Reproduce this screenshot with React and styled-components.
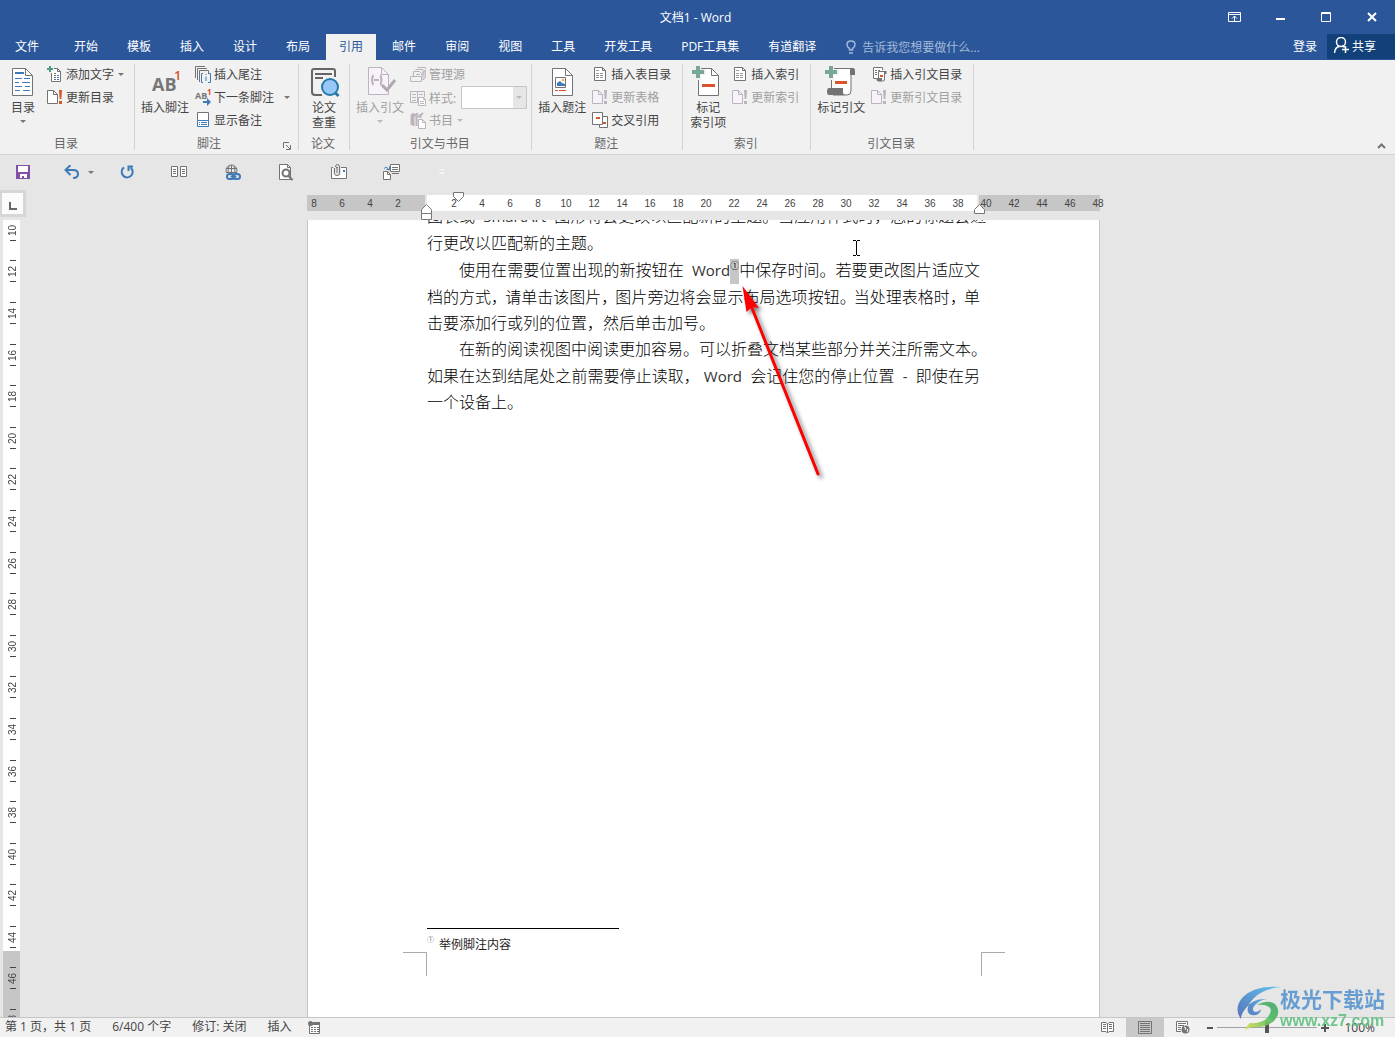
import React from "react";
import styled, { createGlobalStyle, css } from "styled-components";

const GlobalStyle = createGlobalStyle`
  * {
    box-sizing: border-box;
  }
  body {
    margin: 0;
    font-family: "Open Sans", "Noto Sans CJK SC", sans-serif;
    font-size: 12px;
    color: #444;
    background: #e6e6e6;
  }
  button,
  input,
  select {
    font: inherit;
    color: inherit;
    border: 0;
    padding: 0;
    margin: 0;
    background: none;
    border-radius: 0;
  }
  svg {
    display: block;
    flex: none;
  }
`;

const AppStyles = styled.div`
  min-height: 100vh;
  display: flex;
  flex-direction: column;
  position: relative;
  overflow: hidden;
`;

/* ---------- title bar and tabs ---------- */

const TitleBar = styled.header`
  height: 34px;
  background: #2b579a;
  color: white;
  display: grid;
  grid-template-columns: 1fr auto 1fr;
  align-items: center;
  h1 {
    margin: 0;
    padding-right: 4px;
    font-size: 12px;
    font-weight: 400;
  }
`;

const WindowButtons = styled.div`
  grid-column: 3;
  display: flex;
  justify-content: flex-end;
  button {
    width: 46px;
    height: 32px;
    display: flex;
    align-items: center;
    justify-content: center;
  }
`;

const TabBar = styled.nav`
  height: 26px;
  padding-left: 2px;
  background: #2b579a;
  color: white;
  display: flex;
  gap: 3px;
`;

const Tab = styled.button`
  padding: 0 13px;
  line-height: 22px;
  height: 26px;
  white-space: nowrap;
  ${({ $file }) =>
    $file &&
    css`
      margin-right: 6px;
    `}
  ${({ $active }) =>
    $active &&
    css`
      background: #f1f1f1;
      color: #2b579a;
    `}
`;

const TellMe = styled.label`
  display: flex;
  align-items: center;
  gap: 6px;
  margin-left: 14px;
  flex: 1;
  color: #a3b9d9;
  input {
    width: 160px;
  }
  input::placeholder {
    color: #a3b9d9;
    opacity: 1;
  }
`;

const Share = styled.button`
  display: flex;
  align-items: center;
  gap: 3px;
  height: 25px;
  width: 68px;
  padding: 0 0 2px 7px;
  margin-left: -6px;
  background: #124078;
`;

/* ---------- ribbon ---------- */

const Ribbon = styled.section`
  height: 95px;
  padding: 4px 0;
  background: #f1f1f1;
  border-bottom: 1px solid #d2d2d2;
  display: flex;
`;

const GroupStyles = styled.div`
  height: 86px;
  border-right: 1px solid #d2d2d2;
  display: flex;
  flex-direction: column;
  justify-content: space-between;
`;

const GroupBody = styled.div`
  display: flex;
  gap: 6px;
  padding: 0 ${({ $end }) => $end}px 0 ${({ $start }) => $start}px;
`;

const GroupLabel = styled.div`
  display: flex;
  line-height: 12px;
  padding-right: 2px;
  color: #666;
  span {
    flex: 1;
    text-align: center;
  }
  button {
    width: 13px;
    display: flex;
    align-items: flex-end;
  }
`;

const LargeButtonStyles = styled.button`
  min-width: 36px;
  padding-top: 2px;
  display: flex;
  flex-direction: column;
  align-items: center;
  line-height: 15px;
  white-space: pre-line;
  color: ${({ disabled }) => (disabled ? "#a0a0a0" : "#444")};
  > svg:first-child {
    margin-bottom: 2px;
  }
  > svg:last-child {
    margin-top: 5px;
  }
`;

const Column = styled.div`
  display: flex;
  flex-direction: column;
  gap: 2px;
`;

const SmallButtonStyles = styled.button`
  height: 21px;
  display: flex;
  align-items: center;
  gap: 3px;
  white-space: nowrap;
  line-height: 17px;
  color: ${({ disabled }) => (disabled ? "#a0a0a0" : "#444")};
  > svg:last-child {
    margin-left: ${({ $far }) => ($far ? 7 : 1)}px;
  }
`;

const StyleField = styled.div`
  height: 21px;
  display: flex;
  align-items: center;
  gap: 3px;
  color: #a0a0a0;
`;

const StyleSelect = styled.div`
  display: grid;
  margin-left: 2px;
  width: 66px;
  height: 23px;
  border: 1px solid #c6c6c6;
  background: linear-gradient(to left, #e6e6e6 13px, white 13px);
  align-items: center;
  select,
  svg {
    grid-area: 1 / 1;
  }
  select {
    appearance: none;
    width: 100%;
    height: 100%;
  }
  svg {
    justify-self: end;
    margin-right: 4px;
    pointer-events: none;
  }
`;

const Collapse = styled.button`
  margin-left: auto;
  padding-right: 9px;
  align-self: flex-end;
  height: 8px;
`;

const QuickBar = styled.div`
  height: 34px;
  display: flex;
`;

const QuickButton = styled.button`
  width: ${({ $width }) => $width || 53}px;
  display: flex;
  align-items: center;
  justify-content: center;
  gap: 8px;
  ${({ $split }) =>
    $split &&
    css`
      padding-left: 12px;
    `}
`;

/* ---------- rulers and page ---------- */

const RulerRow = styled.div`
  height: 31px;
  display: flex;
`;

const TabSelector = styled.button`
  width: 26px;
  height: 27px;
  margin-top: 1px;
  background: #fbfbfb;
  border: 3px solid #d6d6d6;
  border-left-width: 2px;
  display: flex;
  align-items: flex-end;
  justify-content: center;
  padding-bottom: 4px;
`;

const Desk = styled.div`
  flex: 1;
  display: flex;
  justify-content: center;
  padding-right: 14px;
`;

const HRuler = styled.div`
  width: 793px;
  height: 16px;
  margin-top: 6px;
  position: relative;
  background: linear-gradient(
    to right,
    #c6c6c6 118px,
    #e6e6e6 118px,
    #e6e6e6 120px,
    white 120px,
    white calc(100% - 123px),
    #e6e6e6 calc(100% - 123px),
    #e6e6e6 calc(100% - 121px),
    #c6c6c6 calc(100% - 121px)
  );
`;

const HScale = styled.div`
  display: flex;
  margin-left: -7px;
  font: 10px/18px "Liberation Sans", sans-serif;
  span {
    flex: none;
    width: 28px;
    text-align: center;
  }
`;

const Marker = styled.svg`
  position: absolute;
  left: ${({ $x }) => $x}px;
  top: ${({ $y }) => $y}px;
`;

const Work = styled.main`
  flex: 1;
  display: flex;
`;

const VRuler = styled.div`
  width: 17px;
  margin: 0 6px 0 3px;
  padding-left: 2px;
  overflow: hidden;
  display: flex;
  background: linear-gradient(to top, #c6c6c6 66px, white 66px);
`;

const VScale = styled.div`
  flex: 1;
  margin: -11px 0 -24px;
  display: flex;
  flex-direction: column;
`;

const VMark = styled.div`
  flex: 1;
  display: flex;
  flex-direction: column;
  align-items: center;
  justify-content: center;
  font: 10px/12px "Liberation Sans", sans-serif;
  gap: 4px;
  span {
    height: 12px;
    width: 12px;
    display: flex;
    justify-content: center;
    writing-mode: vertical-rl;
    transform: rotate(180deg);
  }
  &::before,
  &::after {
    content: "";
    width: 6px;
    height: 1px;
    background: #444;
  }
`;

const Page = styled.article`
  width: 793px;
  position: relative;
  overflow: hidden;
  background: white;
  border: 1px solid #c6c6c6;
  border-width: 0 1px;
  display: flex;
  flex-direction: column;
`;

const Body = styled.div`
  margin: -17px 119px 0;
  flex: 1;
  color: black;
  font-size: 16px;
  font-weight: 300;
  p {
    margin: 0;
  }
`;

const Line = styled.span`
  display: block;
  white-space: nowrap;
  line-height: ${({ $short }) => ($short ? 26 : 27)}px;
  height: ${({ $short }) => ($short ? 26 : 27)}px;
  padding-left: ${({ $indent }) => ($indent ? 32 : 0)}px;
  text-align-last: ${({ $end }) => ($end ? "left" : "justify")};
`;

const Latin = styled.span`
  margin: 0 4px;
  font-size: 15px;
  font-weight: 400;
  color: #333;
  & + sup {
    margin-left: -4px;
  }
`;

const Stop = styled.span`
  margin-right: -2px;
`;

const NoteRef = styled.sup`
  display: inline-block;
  height: 25px;
  width: 9px;
  margin-top: 2px;
  overflow: hidden;
  vertical-align: top;
  background: #c6c6c6;
  font: 400 9px/13px "Noto Sans CJK SC", sans-serif;
`;

const Footnote = styled.footer`
  margin: 0 119px;
  height: 24px;
  color: #222;
  line-height: 17px;
  hr {
    width: 192px;
    height: 1px;
    margin: 0 0 7px;
    border: 0;
    background: black;
  }
  sup {
    display: inline-block;
    width: 12px;
    font-size: 7px;
    line-height: 8px;
    color: #666;
    vertical-align: top;
  }
`;

const Corners = styled.div`
  display: flex;
  justify-content: space-between;
  padding: 0 94px 41px 95px;
  i {
    width: 24px;
    height: 24px;
    border-top: 1px solid #ababab;
  }
  i:first-child {
    border-right: 1px solid #ababab;
  }
  i:last-child {
    border-left: 1px solid #ababab;
  }
`;

const Overlay = styled.svg`
  position: absolute;
  left: ${({ $x }) => $x}px;
  top: ${({ $y }) => $y}px;
  overflow: visible;
`;

/* ---------- status bar ---------- */

const StatusBar = styled.footer`
  height: 20px;
  border-top: 1px solid #c6c6c6;
  background: #f1f1f1;
  display: flex;
  justify-content: space-between;
  line-height: 17px;
  white-space: nowrap;
`;

const StatusInfo = styled.div`
  display: flex;
  align-items: flex-start;
  gap: 21px;
  padding-left: 5px;
  svg {
    margin-top: 3px;
    margin-left: -4px;
  }
`;

const StatusView = styled.div`
  display: flex;
  align-items: center;
  padding-right: 20px;
`;

const ViewButton = styled.button`
  width: 38px;
  height: 19px;
  display: flex;
  align-items: center;
  justify-content: center;
  background: ${({ $active }) => ($active ? "#c9c9c9" : "none")};
`;

const Zoom = styled.div`
  display: flex;
  align-items: center;
  gap: 4px;
  margin-left: 5px;
  input {
    appearance: none;
    width: 100px;
    height: 13px;
    background: linear-gradient(#a0a0a0, #a0a0a0) center / 100% 1px no-repeat;
  }
  input::-webkit-slider-thumb {
    appearance: none;
    width: 4px;
    height: 11px;
    background: #555;
  }
  output {
    margin-left: 11px;
  }
`;

const Watermark = styled.div`
  position: absolute;
  right: 10px;
  bottom: 7px;
  display: flex;
  pointer-events: none;
  opacity: 0.9;
  div {
    display: flex;
    flex-direction: column;
    margin-left: -1px;
  }
  strong {
    font-size: 21px;
    line-height: 26px;
    font-weight: 700;
    color: #5a96cf;
  }
  span {
    font: bold 16px/18px "Liberation Sans", sans-serif;
    color: #62c183;
  }
`;

/* ---------- drawings ---------- */

const GRAY = "#737373";
const PALE = "#bcb4bc";
const BLUE = "#3e7ab8";
const RED = "#d9532c";
const GREEN = "#76a797";

const Icon = ({ w = 16, h = 17, children, ...rest }) => (
  <svg
    width={w}
    height={h}
    viewBox={`0 0 ${w} ${h}`}
    fill="none"
    stroke={GRAY}
    aria-hidden="true"
    {...rest}
  >
    {children}
  </svg>
);

const Sheet = ({ x = 0, y = 0, w, h, f = 4, color = GRAY, fill = "white" }) => (
  <g transform={`translate(${x + 0.5} ${y + 0.5})`} stroke={color}>
    <path d={`M0 0H${w - f}L${w} ${f}V${h}H0Z`} fill={fill} />
    <path d={`M${w - f} 0V${f}H${w}`} />
  </g>
);

const Caret = ({ color = "#777" }) => (
  <svg width="6" height="3" viewBox="0 0 6 3" aria-hidden="true">
    <path d="M0 0H6L3 3Z" fill={color} />
  </svg>
);

const TocIcon = () => (
  <Icon w={32} h={32}>
    <Sheet x={5} y={2} w={20} h={27} f={7} />
    <path
      d="M8 12.500h7M8 16.500h4M8 20.500h7M8 24.500h5M17 12.500h6M15 16.500h8M18 20.500h5M16 24.500h7"
      stroke={BLUE}
    />
    <path d="M8 7h9" stroke={BLUE} strokeWidth="2" />
  </Icon>
);

const AddTextIcon = () => (
  <Icon>
    <Sheet x={4} y={2} w={9} h={13} f={3} />
    <path d="M7 7.500h2M7 9.500h2M7 11.500h2M7 13.500h2" />
    <path d="M10 9.500h2M10 11.500h2M10 13.500h2" stroke={BLUE} />
    <path d="M-1 3H7M3 -1V7" stroke="#f1f1f1" strokeWidth="4" />
    <path d="M0 3H6M3 0V6" stroke="#4f9c83" strokeWidth="2" />
  </Icon>
);

const UpdateIcon = ({ off }) => (
  <Icon>
    <Sheet
      y={1}
      w={10}
      h={13}
      color={off ? PALE : GRAY}
      fill={off ? "#f8f3fa" : "white"}
    />
    <path
      d="M12 1h3l-.6 9h-1.800zM12 12h3v3h-3z"
      fill={off ? PALE : RED}
      stroke="none"
    />
  </Icon>
);

const FootnoteIcon = () => (
  <Icon w={32} h={32} stroke="none" fontFamily="Open Sans, sans-serif">
    <text x="3" y="25" fontSize="18" fontWeight="700" fill="#777">
      AB
    </text>
    <text x="25" y="14" fontSize="13" fontWeight="600" fill={RED}>
      1
    </text>
  </Icon>
);

const EndnoteIcon = () => (
  <Icon>
    <path d="M.5 12V.5H10M2.500 14V2.500H12M4.500 16V4.500H13.500V7" />
    <path
      d="M8 7.500H6.500V16.500H8M13 7.500h2.500V16.500H13M11 10.500V15M11 8v1"
      stroke={BLUE}
    />
  </Icon>
);

const NextNoteIcon = () => (
  <Icon stroke="none" fontFamily="Open Sans, sans-serif" fontWeight="700">
    <text x="0" y="10" fontSize="9" fill="#777">
      AB
    </text>
    <text x="12" y="6" fontSize="8" fill={RED}>
      1
    </text>
    <path d="M8 12h4v-3l4 4-4 4v-3H8z" fill={BLUE} />
  </Icon>
);

const ShowNotesIcon = () => (
  <Icon>
    <path d="M2.500 9V.5H13.500V9" fill="white" />
    <path d="M2.500 8.500h11v6h-11z" fill="white" stroke={BLUE} />
    <path d="M4 10.500h1M6 10.500h6M4 12.500h1M6 12.500h6" stroke={BLUE} />
  </Icon>
);

const PaperIcon = () => (
  <Icon w={32} h={32}>
    <path
      d="M27 11V5q0-2-2-2H6Q4 3 4 5V26q0 3 3 3h7"
      stroke="#666"
      strokeWidth="2"
    />
    <path d="M7 8H24M7 12h8" stroke="#666" strokeWidth="2" />
    <circle cx="22" cy="21" r="8" fill="#98c8f8" stroke="#2779a8" strokeWidth="2" />
    <path d="M27.500 27l3 3" stroke="#2779a8" strokeWidth="3" />
  </Icon>
);

const CitationIcon = () => (
  <Icon w={32} h={32} stroke={PALE}>
    <Sheet x={4} y={1} w={20} h={27} f={7} color={PALE} fill="#f8f3fa" />
    <path d="M9.500 9.500H9Q7 14 9 18.500h.5M16 9.500h.5q2 4.500 0 9H16M10 14h5" strokeWidth="2" />
    <path d="M18 19l5 5L31 14" strokeWidth="3" stroke="#b0aab0" />
  </Icon>
);

const SourcesIcon = () => (
  <Icon stroke={PALE}>
    <path d="M.5 10.500h11v5H.5zM3.500 10V5.500h6L12 8v2M5.500 3.500H13V9M7.500 1.500H16V12" />
    <path d="M13 14V7l2-3v8zM6 8.500h4" />
  </Icon>
);

const StyleIcon = () => (
  <Icon stroke={PALE}>
    <path d="M.5 2.500h7v11h-7zM7.500 2.500h7V8M2 5.500h4M2 8.500h4M2 11.500h4M9 5.500h4" />
    <Sheet x={8} y={8} w={7} h={8} f={2} color={PALE} />
    <path d="M10 12.500h4M10 14.500h4" />
  </Icon>
);

const BooksIcon = () => (
  <Icon stroke={PALE}>
    <path
      d="M1.500 4v9M3.500 2v12M6.500 3v11M1 3.500l3-2M4 3.500l4-2M8 5l5-4M10.500 3v3"
      strokeWidth="2"
    />
    <Sheet x={8} y={7} w={7} h={9} f={3} color={PALE} />
  </Icon>
);

const CaptionIcon = () => (
  <Icon w={32} h={32}>
    <Sheet x={6} y={2} w={20} h={27} f={7} />
    <path d="M9.500 11.500h10v10h-10z" fill="white" />
    <path d="M11 20v-3l3-2 2 2 3 1v2z" fill={BLUE} stroke="none" />
    <circle cx="17" cy="14" r="1.500" fill="#edb95e" stroke="none" />
    <path d="M9 24.500h3M13 24.500h7" stroke={RED} />
  </Icon>
);

const ListIcon = () => (
  <Icon>
    <Sheet x={2} y={1} w={11} h={13} f={3} />
    <path d="M4 4.500h4M4 7.500h8M4 9.500h8M4 11.500h8" stroke="#999" strokeDasharray="3 1" />
  </Icon>
);

const CrossRefIcon = () => (
  <Icon>
    <path d="M7.500 4.500h8v11h-8z" fill="white" />
    <path d="M.5.500h10v12H.5z" fill="white" />
    <path d="M4 6h4M11 11h3" stroke={RED} strokeWidth="2" />
  </Icon>
);

const Plus = () => (
  <path d="M0 6H12M6 0V12" stroke={GREEN} strokeWidth="4" />
);

const MarkIndexIcon = () => (
  <Icon w={32} h={32}>
    <Sheet x={6} y={2} w={20} h={27} f={7} />
    <path d="M-1 6H14M6 0V14" stroke="#f1f1f1" strokeWidth="6" />
    <Plus />
    <path d="M10 19.500H23" stroke={RED} strokeWidth="3" />
  </Icon>
);

const MarkCitationIcon = () => (
  <Icon w={32} h={32}>
    <path d="M6.500 22V2.500H26V25q0 4-4 4H8" fill="white" />
    <path d="M25 2h3q2 0 2 3v4h-5z" fill={GRAY} stroke="none" />
    <path d="M4 22H18v4q0 3 3 3H4q-2 0-2-3.500T4 22z" fill={GRAY} stroke="none" />
    <path d="M-1 6H14M6 0V14" stroke="#f1f1f1" strokeWidth="6" />
    <Plus />
    <path d="M10 16.500H22" stroke={RED} strokeWidth="3" />
  </Icon>
);

const TableOfAuthIcon = () => (
  <Icon>
    <path d="M11.500 4V1.500h-9v11H5" fill="white" />
    <path d="M4 4.500h5M4 6.500h2M4 8.500h2" strokeDasharray="2 1" />
    <path d="M7.500 12V5.500h6V14q0 1-2 1H7" fill="white" />
    <path d="M13 5h2.500v3H13zM5 12h6v3H6z" fill={GRAY} stroke="none" />
    <path d="M9 10h3" stroke={RED} strokeWidth="2" />
  </Icon>
);

const LauncherIcon = () => (
  <Icon w={8} h={8}>
    <path d="M.5 6V.5H6M3 3l4 4M7.500 3v4.500H3" />
  </Icon>
);

const SaveIcon = () => (
  <Icon w={14} h={14} stroke="none">
    <path d="M0 0h14v14H0z" fill="#8350a8" />
    <path d="M2 1h10v6H2zM4 9h7v4H8v-2H6v2H4z" fill="white" />
  </Icon>
);

const UndoIcon = () => (
  <Icon w={16} h={14} stroke={BLUE}>
    <path d="M2 5H9q5 0 5 4t-5 4" strokeWidth="2" />
    <path d="M6.500 0L1.500 5l5 5" strokeWidth="2" />
  </Icon>
);

const RedoIcon = () => (
  <Icon w={14} h={14} stroke={BLUE}>
    <path d="M10.500 2.500A5.500 5.500 0 1 1 4 2.400" strokeWidth="2" />
    <path d="M8.500 6V1.500H13" strokeWidth="2" />
  </Icon>
);

const ColumnsIcon = () => (
  <Icon w={17} h={12}>
    <path d="M.5.500h6v10h-6zM9.500.500h6v10h-6z" fill="white" />
    <path d="M2 3.500h3M2 5.500h3M2 7.500h3M11 3.500h3M11 5.500h3M11 7.500h3" />
  </Icon>
);

const LinkIcon = () => (
  <Icon w={16} h={17}>
    <circle cx="6.500" cy="6.500" r="5.500" />
    <path d="M1 4.500h11M1 8.500h11M6.500 1v11M4 2q-2 4.500 0 9M9 2q2 4.500 0 9" />
    <rect x="0" y="9" width="16" height="8" fill="#e6e6e6" stroke="none" />
    <g stroke={BLUE} strokeWidth="2">
      <rect x="2" y="10" width="7" height="5" rx="2.500" />
      <rect x="8" y="10" width="7" height="5" rx="2.500" />
      <path d="M5.500 12.500h6" />
    </g>
  </Icon>
);

const PreviewIcon = () => (
  <Icon w={16} h={17}>
    <Sheet x={1} y={0} w={11} h={15} f={3} />
    <circle cx="8" cy="9" r="3.500" fill="white" strokeWidth="2" />
    <path d="M10.500 12l4 4" strokeWidth="2" />
  </Icon>
);

const AttachIcon = () => (
  <Icon w={16} h={16}>
    <path d="M.5 3.500h15v11H.5z" fill="white" />
    <path
      d="M3.500 9.500V3q0-2.500 2.500-2.500T8.500 3v6q0 1.500-1.250 1.500T6 9V4"
      stroke="#e6e6e6"
      strokeWidth="3"
    />
    <path d="M3.500 4v5.500q0 2 2.500 2t2.500-2V3Q8.500.500 6.500.500T4.500 3M6 4v5" />
    <path d="M12 6h2v2h-2z" fill={BLUE} stroke="none" />
  </Icon>
);

const NavigateIcon = () => (
  <Icon w={17} h={17}>
    <path d="M7.500.500h9v7h-9z" fill="white" />
    <path d="M9 3.500h6M9 5.500h6M9 9.500h7" />
    <Sheet x={0} y={7} w={7} h={8} f={3} />
    <path d="M1 4.500q3-3 5 2M3.500 5.500h3v-3" stroke={BLUE} />
  </Icon>
);

/* ---------- components ---------- */

const Group = ({ label, start = 6, end = 11, launcher, children }) => (
  <GroupStyles>
    <GroupBody $start={start} $end={end}>
      {children}
    </GroupBody>
    <GroupLabel>
      <span>{label}</span>
      {launcher && (
        <button aria-label={label}>
          <LauncherIcon />
        </button>
      )}
    </GroupLabel>
  </GroupStyles>
);

const LargeButton = ({ icon, caret, disabled, children }) => (
  <LargeButtonStyles disabled={disabled}>
    {icon}
    <span>{children}</span>
    {caret && <Caret color={disabled ? "#bbb" : "#777"} />}
  </LargeButtonStyles>
);

const SmallButton = ({ icon, caret, far, disabled, children }) => (
  <SmallButtonStyles disabled={disabled} $far={far}>
    {icon}
    <span>{children}</span>
    {caret && <Caret color={disabled ? "#bbb" : "#777"} />}
  </SmallButtonStyles>
);

const tabs = [
  "文件",
  "开始",
  "模板",
  "插入",
  "设计",
  "布局",
  "引用",
  "邮件",
  "审阅",
  "视图",
  "工具",
  "开发工具",
  "PDF工具集",
  "有道翻译",
];

const hMarks = Array.from({ length: 29 }, (_, i) => Math.abs(i * 2 - 8));
const vMarks = Array.from({ length: 20 }, (_, i) => i * 2 + 10);

// full-width stops take a little less than a whole cell on crowded lines
const tighten = (text) =>
  text
    .split(/([，。])/)
    .map((part, i) => (i % 2 ? <Stop key={i}>{part}</Stop> : part));

const Header = () => (
  <>
    <TitleBar>
      <span />
      <h1>文档1 - Word</h1>
      <WindowButtons>
        <button aria-label="功能区显示选项">
          <Icon w={13} h={10} stroke="white">
            <path d="M.5.500h12v9H.5zM0 2.500h13M6.500 9V4M4 6.500L6.500 4 9 6.500" />
          </Icon>
        </button>
        <button aria-label="最小化">
          <Icon w={9} h={6} stroke="white">
            <path d="M0 5H9" strokeWidth="2" />
          </Icon>
        </button>
        <button aria-label="最大化">
          <Icon w={10} h={10} stroke="white">
            <path d="M.5.500h9v9h-9zM0 1.500h10" />
          </Icon>
        </button>
        <button aria-label="关闭">
          <Icon w={10} h={10} stroke="white">
            <path d="M1 1l8 8M9 1L1 9" strokeWidth="2" />
          </Icon>
        </button>
      </WindowButtons>
    </TitleBar>
    <TabBar>
      {tabs.map((tab, i) => (
        <Tab key={tab} $file={i === 0} $active={tab === "引用"}>
          {tab}
        </Tab>
      ))}
      <TellMe>
        <Icon w={10} h={14} stroke="#a3b9d9">
          <path
            d="M3.500 10V8.500Q1 7 1 4.500 1 1 5 1t4 3.500Q9 7 6.500 8.500V10zM3 13h4"
            strokeWidth="1.500"
          />
        </Icon>
        <input aria-label="操作说明搜索" placeholder="告诉我您想要做什么..." />
      </TellMe>
      <Tab>登录</Tab>
      <Share>
        <Icon w={15} h={17} stroke="white" strokeWidth="1.500">
          <circle cx="7" cy="5" r="4.500" />
          <path d="M.5 16Q1 10 5.500 9.500M8 9q2 .5 2.500 1.500M11.500 9v7M8 12.500h7" />
        </Icon>
        共享
      </Share>
    </TabBar>
  </>
);

const References = () => (
  <Ribbon>
    <Group label="目录" start={5} end={10}>
      <LargeButton icon={<TocIcon />} caret>
        目录
      </LargeButton>
      <Column>
        <SmallButton icon={<AddTextIcon />} caret>
          添加文字
        </SmallButton>
        <SmallButton icon={<UpdateIcon />}>更新目录</SmallButton>
      </Column>
    </Group>
    <Group label="脚注" end={8} launcher>
      <LargeButton icon={<FootnoteIcon />}>插入脚注</LargeButton>
      <Column>
        <SmallButton icon={<EndnoteIcon />}>插入尾注</SmallButton>
        <SmallButton icon={<NextNoteIcon />} caret far>
          下一条脚注
        </SmallButton>
        <SmallButton icon={<ShowNotesIcon />}>显示备注</SmallButton>
      </Column>
    </Group>
    <Group label="论文" start={7} end={7}>
      <LargeButton icon={<PaperIcon />}>{"论文\n查重"}</LargeButton>
    </Group>
    <Group label="引文与书目" end={4}>
      <LargeButton icon={<CitationIcon />} caret disabled>
        插入引文
      </LargeButton>
      <Column>
        <SmallButton icon={<SourcesIcon />} disabled>
          管理源
        </SmallButton>
        <StyleField>
          <StyleIcon />
          <label htmlFor="cite-style">样式:</label>
          <StyleSelect>
            <select id="cite-style" disabled />
            <Caret color="#bbb" />
          </StyleSelect>
        </StyleField>
        <SmallButton icon={<BooksIcon />} caret disabled>
          书目
        </SmallButton>
      </Column>
    </Group>
    <Group label="题注">
      <LargeButton icon={<CaptionIcon />}>插入题注</LargeButton>
      <Column>
        <SmallButton icon={<ListIcon />}>插入表目录</SmallButton>
        <SmallButton icon={<UpdateIcon off />} disabled>
          更新表格
        </SmallButton>
        <SmallButton icon={<CrossRefIcon />}>交叉引用</SmallButton>
      </Column>
    </Group>
    <Group label="索引" start={7}>
      <LargeButton icon={<MarkIndexIcon />}>{"标记\n索引项"}</LargeButton>
      <Column>
        <SmallButton icon={<ListIcon />}>插入索引</SmallButton>
        <SmallButton icon={<UpdateIcon off />} disabled>
          更新索引
        </SmallButton>
      </Column>
    </Group>
    <Group label="引文目录">
      <LargeButton icon={<MarkCitationIcon />}>标记引文</LargeButton>
      <Column>
        <SmallButton icon={<TableOfAuthIcon />}>插入引文目录</SmallButton>
        <SmallButton icon={<UpdateIcon off />} disabled>
          更新引文目录
        </SmallButton>
      </Column>
    </Group>
    <Collapse aria-label="折叠功能区">
      <Icon w={9} h={6}>
        <path d="M1 5l3.500-3.500L8 5" strokeWidth="2" />
      </Icon>
    </Collapse>
  </Ribbon>
);

const QuickAccess = () => (
  <QuickBar>
    <QuickButton $width={46} aria-label="保存">
      <SaveIcon />
    </QuickButton>
    <QuickButton $width={54} $split aria-label="撤消">
      <UndoIcon />
      <Caret />
    </QuickButton>
    <QuickButton aria-label="重复">
      <RedoIcon />
    </QuickButton>
    <QuickButton aria-label="分栏">
      <ColumnsIcon />
    </QuickButton>
    <QuickButton aria-label="链接">
      <LinkIcon />
    </QuickButton>
    <QuickButton aria-label="打印预览">
      <PreviewIcon />
    </QuickButton>
    <QuickButton aria-label="附件">
      <AttachIcon />
    </QuickButton>
    <QuickButton aria-label="交叉引用">
      <NavigateIcon />
    </QuickButton>
    <QuickButton $width={48} aria-label="自定义快速访问工具栏">
      <Icon w={6} h={7} stroke="#f6f6f6">
        <path d="M0 .5h6" />
        <path d="M0 3h6L3 6z" fill="#f6f6f6" stroke="none" />
      </Icon>
    </QuickButton>
  </QuickBar>
);

const Rulers = () => (
  <RulerRow>
    <TabSelector aria-label="制表符">
      <Icon w={8} h={8} stroke="#666">
        <path d="M1 0V7H8" strokeWidth="2" />
      </Icon>
    </TabSelector>
    <Desk>
      <HRuler>
        <HScale>
          {hMarks.map((n, i) => (
            <span key={i}>{n || ""}</span>
          ))}
        </HScale>
        <Marker $x={146} $y={-3} width="11" height="10" fill="white" stroke="#777">
          <path d="M.5.500h10v4L5.500 9.500.5 4.500z" />
        </Marker>
        <Marker $x={114} $y={9} width="11" height="17" fill="white" stroke="#777">
          <path d="M.5 9.500v-4L5.500.500l5 5v4zM.5 9.500h10v6H.5z" />
        </Marker>
        <Marker $x={667} $y={9} width="11" height="11" fill="white" stroke="#777">
          <path d="M.5 9.500v-4L5.500.500l5 5v4z" />
        </Marker>
      </HRuler>
    </Desk>
  </RulerRow>
);

const Document = () => (
  <Page>
    <Body>
      <p>
        <Line>
          图表或 <Latin>SmartArt</Latin> 图形将会更改以匹配新的主题。当应用样式时，您的标题会进
        </Line>
        <Line $end>行更改以匹配新的主题。</Line>
      </p>
      <p>
        <Line $indent>
          使用在需要位置出现的新按钮在 <Latin>Word</Latin>
          <NoteRef>①</NoteRef>
          中保存时间。若要更改图片适应文
        </Line>
        <Line $short>
          {tighten(
            "档的方式，请单击该图片，图片旁边将会显示布局选项按钮。当处理表格时，单"
          )}
        </Line>
        <Line $short $end>
          击要添加行或列的位置，然后单击加号。
        </Line>
      </p>
      <p>
        <Line $indent>
          在新的阅读视图中阅读更加容易。可以折叠文档某些部分并关注所需文本。
        </Line>
        <Line $short>
          如果在达到结尾处之前需要停止读取，<Latin>Word</Latin> 会记住您的停止位置{" "}
          <Latin>-</Latin> 即使在另
        </Line>
        <Line $short $end>
          一个设备上。
        </Line>
      </p>
    </Body>
    <Footnote>
      <hr />
      <sup>①</sup>举例脚注内容
    </Footnote>
    <Corners>
      <i />
      <i />
    </Corners>
    <Overlay $x={545} $y={20} width="8" height="16" fill="none" stroke="black">
      <path d="M0 .5h3M4 .5h3M0 15.500h3M4 15.500h3M3.500 1v14" />
    </Overlay>
    <Overlay $x={434} $y={66} width="80" height="192">
      <g style={{ filter: "drop-shadow(3px 3px 2px rgba(0, 0, 0, 0.5))" }}>
        <path d="M10 22L76 188" stroke="#f00" strokeWidth="3" strokeLinecap="round" />
        <path d="M.5 0L4.500 26 10 21 17 22z" fill="#f00" />
      </g>
    </Overlay>
  </Page>
);

const Status = () => (
  <StatusBar>
    <StatusInfo>
      <span>第 1 页，共 1 页</span>
      <span>6/400 个字</span>
      <span>修订: 关闭</span>
      <span>插入</span>
      <Icon w={13} h={13}>
        <path d="M1.500 4v8.500h10V3.500H3" fill="white" />
        <path d="M5 1h7v3H5z" fill={GRAY} stroke="none" />
        <circle cx="2.500" cy="2.500" r="2.500" fill={GRAY} stroke="none" />
        <path d="M3 6.500h8M3 8.500h8M3 10.500h8" strokeDasharray="2 1" />
      </Icon>
    </StatusInfo>
    <StatusView>
      <ViewButton aria-label="阅读视图">
        <Icon w={13} h={13}>
          <path d="M.5 1.500H5L6.500 3 8 1.500h4.500v9H8L6.500 12 5 10.500H.5zM6.500 3v9" fill="white" />
          <path d="M2 3.500h3M2 5.500h3M2 7.500h3M8 3.500h3M8 5.500h3M8 7.500h3" />
        </Icon>
      </ViewButton>
      <ViewButton $active aria-label="页面视图">
        <Icon w={14} h={13}>
          <path d="M.5.500h13v12H.5zM2 2.500h10M2 4.500h10M2 6.500h10M2 8.500h10M2 10.500h10" />
        </Icon>
      </ViewButton>
      <ViewButton aria-label="Web 版式视图">
        <Icon w={14} h={13}>
          <path d="M5 10.500H.5V.5h11V4" fill="white" />
          <path d="M2 2.500h8M2 4.500h6M2 6.500h3M2 8.500h3" />
          <circle cx="9.500" cy="8.500" r="4" fill={GRAY} stroke="none" />
          <path d="M8 6l2 1-1 2M11 8l1 1-1 2" stroke="white" />
        </Icon>
      </ViewButton>
      <Zoom>
        <button aria-label="缩小">
          <Icon w={6} h={8} stroke="#555">
            <path d="M0 4h6" strokeWidth="2" />
          </Icon>
        </button>
        <input type="range" min="10" max="190" defaultValue="100" aria-label="缩放" />
        <button aria-label="放大">
          <Icon w={8} h={8} stroke="#555">
            <path d="M0 4h8M4 0v8" strokeWidth="2" />
          </Icon>
        </button>
        <output>100%</output>
      </Zoom>
    </StatusView>
  </StatusBar>
);

const Logo = () => (
  <svg width="44" height="44" viewBox="0 0 44 44" aria-hidden="true">
    <defs>
      <linearGradient id="sky" x1="0" y1="1" x2="1" y2="0">
        <stop offset="0" stopColor="#4668b4" />
        <stop offset="1" stopColor="#55c0ee" />
      </linearGradient>
      <linearGradient id="leaf" x1="0" y1="1" x2="1" y2="0">
        <stop offset="0" stopColor="#e3e04c" />
        <stop offset="0.6" stopColor="#4dba60" />
        <stop offset="1" stopColor="#44a36c" />
      </linearGradient>
    </defs>
    <path
      d="M44 1Q26 3 17 12 9 20 11 26q2 4 8 3 5-2 5-6-2 3-5 3-5-1-2-6 5-6 13-7-14-1-21 9Q4 28 4 33-4 22 6 11 18-1 44 1Z"
      fill="url(#sky)"
    />
    <path
      d="M20 19Q31 13 38 18q7 8-1 17-8 7-20 6-5 0-9 3 1-4 5-7 12 1 18-6 5-7 1-10-4-3-12-2Z"
      fill="url(#leaf)"
    />
  </svg>
);

const App = () => {
  return (
    <AppStyles>
      <GlobalStyle />
      <Header />
      <References />
      <QuickAccess />
      <Rulers />
      <Work>
        <VRuler>
          <VScale>
            {vMarks.map((n) => (
              <VMark key={n}>
                <span>{n}</span>
              </VMark>
            ))}
          </VScale>
        </VRuler>
        <Desk>
          <Document />
        </Desk>
      </Work>
      <Status />
      <Watermark>
        <Logo />
        <div>
          <strong>极光下载站</strong>
          <span>www.xz7.com</span>
        </div>
      </Watermark>
    </AppStyles>
  );
};

export default App;
